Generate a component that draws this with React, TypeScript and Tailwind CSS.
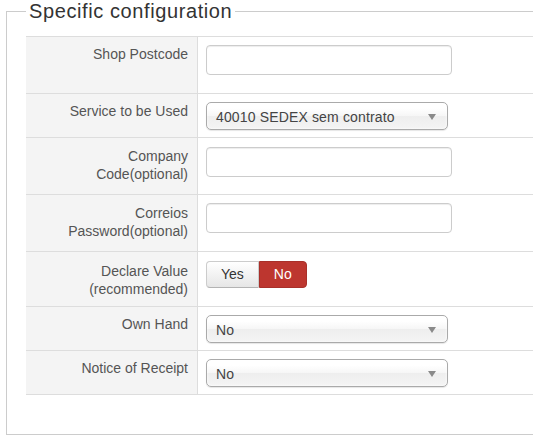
import React from "react";

const font = { fontFamily: '"Liberation Sans", Arial, sans-serif' };

function Label({ children, pt }: { children: React.ReactNode; pt: string }) {
  return (
    <div className={`w-[172px] shrink-0 bg-[#f4f4f4] border-r border-[#dddddd] pr-[9px] ${pt} flex justify-end`}>
      <div className="w-[150px] text-right text-[14px] leading-[18px] text-[#555555]">{children}</div>
    </div>
  );
}

function TextInput() {
  return (
    <div className="w-[246px] h-[30px] bg-white border border-[#cccccc] rounded-[4px] shadow-[inset_0_1px_1px_rgba(0,0,0,0.075)]" />
  );
}

function Chosen({ value }: { value: string }) {
  return (
    <div className="relative w-[242px] h-[28px] border border-[#aaaaaa] rounded-[5px] bg-[linear-gradient(#ffffff_20%,#f6f6f6_50%,#eeeeee_52%,#f4f4f4_100%)] shadow-[inset_0_0_3px_#fff,0_1px_1px_rgba(0,0,0,0.1)] flex items-center pl-[9px] text-[14px] text-[#444444]">
      <span className="leading-[18px] pt-[1px] tracking-[0.15px]">{value}</span>
      <svg className="absolute right-[11px] top-[11px]" width="8" height="6" viewBox="0 0 8 6">
        <path d="M0 0 L8 0 L4 6 Z" fill="#8a8a8a" />
      </svg>
    </div>
  );
}

function Toggle() {
  return (
    <div className="flex h-[27px] text-[14px]">
      <div className="px-[14px] flex items-center border border-[#cccccc] border-b-[#b3b3b3] rounded-l-[4px] bg-[linear-gradient(#ffffff,#e6e6e6)] text-[#333333] shadow-[inset_0_1px_0_rgba(255,255,255,0.2)]">
        Yes
      </div>
      <div className="px-[14px] flex items-center border border-[#a8302a] rounded-r-[4px] bg-[#bd362f] text-white">
        No
      </div>
    </div>
  );
}

function Row({
  label,
  h,
  pt,
  cpt,
  children,
}: {
  label: React.ReactNode;
  h: string;
  pt: string;
  cpt: string;
  children: React.ReactNode;
}) {
  return (
    <div className={`flex border-b border-[#dddddd] ${h}`}>
      <Label pt={pt}>{label}</Label>
      <div className={`pl-[8px] ${cpt}`}>{children}</div>
    </div>
  );
}

export default function App() {
  return (
    <div className="w-[533px] h-[439px] overflow-hidden bg-white" style={font}>
      <fieldset className="ml-[6px] w-[600px] border border-[#cccccc] pl-[19px] pt-[14px] pb-[39px]">
        <legend className="px-[3px] text-[20px] leading-[22px] tracking-[0.6px] text-[#333333]">Specific configuration</legend>
        <div className="border-t border-[#dddddd]">
          <Row label="Shop Postcode" h="h-[57px]" pt="pt-[8px]" cpt="pt-[8px]">
            <TextInput />
          </Row>
          <Row label="Service to be Used" h="h-[44px]" pt="pt-[8px]" cpt="pt-[8px]">
            <Chosen value="40010 SEDEX sem contrato" />
          </Row>
          <Row label="Company Code(optional)" h="h-[57px]" pt="pt-[9px]" cpt="pt-[9px]">
            <TextInput />
          </Row>
          <Row label="Correios Password(optional)" h="h-[57px]" pt="pt-[9px]" cpt="pt-[8px]">
            <TextInput />
          </Row>
          <Row label="Declare Value (recommended)" h="h-[55px]" pt="pt-[10px]" cpt="pt-[9px]">
            <Toggle />
          </Row>
          <Row label="Own Hand" h="h-[44px]" pt="pt-[8px]" cpt="pt-[8px]">
            <Chosen value="No" />
          </Row>
          <Row label="Notice of Receipt" h="h-[44px]" pt="pt-[8px]" cpt="pt-[8px]">
            <Chosen value="No" />
          </Row>
        </div>
      </fieldset>
    </div>
  );
}
